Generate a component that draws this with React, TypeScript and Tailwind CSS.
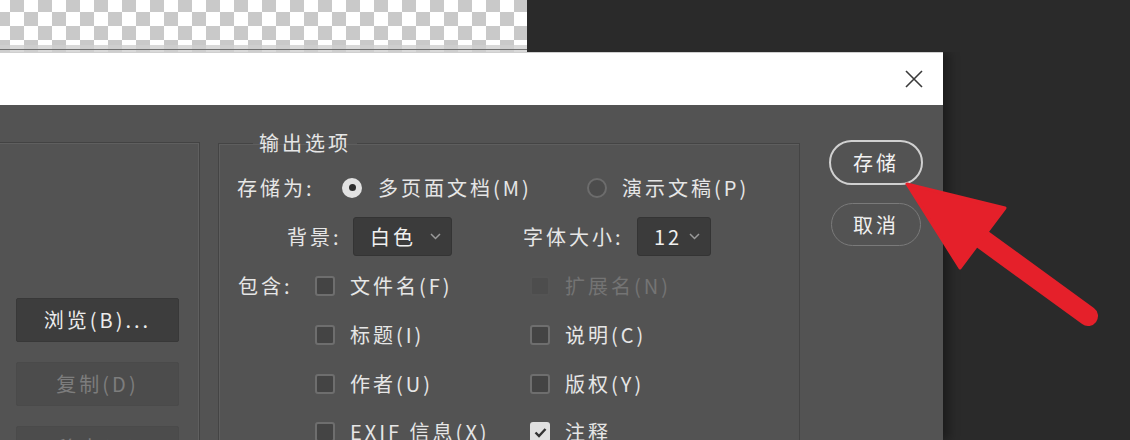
import React from "react";

const font = "font-['Noto_Sans_CJK_SC','Noto_Sans',sans-serif]";

function Radio({ checked }: { checked?: boolean }) {
  return checked ? (
    <span className="flex h-[20px] w-[20px] shrink-0 items-center justify-center rounded-full bg-[#e2e2e2]">
      <span className="h-[7px] w-[7px] rounded-full bg-[#2e2e2e]" />
    </span>
  ) : (
    <span className="h-[20px] w-[20px] shrink-0 rounded-full border-2 border-[#6c6c6c] bg-[#4c4c4c]" />
  );
}

function Box({ checked, disabled }: { checked?: boolean; disabled?: boolean }) {
  if (checked) {
    return (
      <span className="flex h-[20px] w-[20px] shrink-0 items-center justify-center rounded-[3px] bg-[#e0e0e0]">
        <svg width="13" height="11" viewBox="0 0 13 11">
          <path d="M1.5 5.5 L5 9 L11.5 2" fill="none" stroke="#333" strokeWidth="2.4" />
        </svg>
      </span>
    );
  }
  return (
    <span
      className={`h-[20px] w-[20px] shrink-0 rounded-[3px] border-2 ${
        disabled ? "border-[#545454] bg-[#4d4d4d]" : "border-[#6e6e6e] bg-[#444444]"
      }`}
    />
  );
}

function Check({
  label,
  checked,
  disabled,
  wide,
}: {
  label: string;
  checked?: boolean;
  disabled?: boolean;
  wide?: boolean;
}) {
  return (
    <div className={`flex items-center gap-[15px] ${wide ? "w-[215px]" : ""}`}>
      <Box checked={checked} disabled={disabled} />
      <span className={disabled ? "text-[#747474]" : "text-[#e6e6e6]"}>{label}</span>
    </div>
  );
}

function Select({ value, w }: { value: string; w: string }) {
  return (
    <div
      className={`flex h-[39px] items-center justify-between rounded-[3px] border border-[#343434] bg-[#3b3b3b] pl-[16px] pr-[10px] ${w}`}
    >
      <span className="text-[#f0f0f0]">{value}</span>
      <svg width="11" height="7" viewBox="0 0 11 7">
        <path d="M1 1 L5.5 5.5 L10 1" fill="none" stroke="#9a9a9a" strokeWidth="1.5" />
      </svg>
    </div>
  );
}

export default function App() {
  return (
    <div className={`relative h-[440px] w-[1130px] overflow-hidden bg-[#2a2a2a] ${font}`}>
      {/* canvas strip */}
      <div className="flex h-[52px]">
        <div className="relative h-[52px] w-[527px] bg-[conic-gradient(#c9c9c9_25%,#ffffff_0_50%,#c9c9c9_0_75%,#ffffff_0)] bg-[length:28px_28px] bg-[position:-4px_-2px]">
          <div className="absolute bottom-0 left-0 h-[7px] w-full bg-[#cfcfcf] opacity-80" />
          <div className="absolute bottom-[2px] left-0 h-[1px] w-full bg-[#6f6f6f]" />
        </div>
        <div className="flex-1 bg-[#2a2a2a]" />
      </div>

      {/* dialog */}
      <div className="w-[943px] shadow-[6px_0_10px_rgba(0,0,0,0.35)]">
        <div className="flex h-[53px] items-center justify-end border-t border-[#cfcfcf] bg-white pr-[19px]">
          <svg width="20" height="20" viewBox="0 0 20 20">
            <path d="M2 2 L18 18 M18 2 L2 18" stroke="#3a3a3a" strokeWidth="1.6" />
          </svg>
        </div>

        <div className="flex h-[335px] items-start bg-[#535353] text-[20px] leading-none tracking-[3px] text-[#e6e6e6]">
          {/* left panel */}
          <div className="mt-[37px] h-[300px] w-[200px] border-r border-t border-[#434343] shadow-[inset_-1px_1px_0_#5f5f5f]">
            <div className="flex flex-col gap-[20px] pl-[16px] pt-[155px]">
              <div className="flex h-[44px] w-[163px] items-center justify-center rounded-[2px] border border-[#383838] bg-[#3d3d3d] text-[#ececec]">
                浏览(B)...
              </div>
              <div className="flex h-[44px] w-[163px] items-center justify-center rounded-[2px] border border-[#4a4a4a] bg-[#4c4c4c] text-[#7d7d7d]">
                复制(D)
              </div>
              <div className="flex h-[44px] w-[163px] items-center justify-center rounded-[2px] border border-[#4a4a4a] bg-[#4c4c4c] text-[#7d7d7d]">
                移去(R)
              </div>
            </div>
          </div>

          {/* output options */}
          <fieldset className="ml-[18px] mt-[26px] h-[320px] w-[582px] border border-[#444444] shadow-[inset_1px_1px_0_#5e5e5e]">
            <legend className="ml-[34px] px-[6px] leading-[24px] text-[#e6e6e6]">输出选项</legend>
            <div className="pt-[8px]">
              <div className="flex h-[49px] items-center pl-[18px]">
                <span className="w-[105px]">存储为:</span>
                <div className="flex w-[245px] items-center gap-[16px]">
                  <Radio checked />
                  <span>多页面文档(M)</span>
                </div>
                <div className="flex items-center gap-[15px]">
                  <Radio />
                  <span>演示文稿(P)</span>
                </div>
              </div>

              <div className="flex h-[49px] items-center pl-[68px]">
                <span className="w-[66px]">背景:</span>
                <Select value="白色" w="w-[99px]" />
                <span className="ml-[71px] w-[114px]">字体大小:</span>
                <Select value="12" w="w-[74px]" />
              </div>

              <div className="flex h-[49px] items-center pl-[19px]">
                <span className="w-[77px]">包含:</span>
                <Check label="文件名(F)" wide />
                <Check label="扩展名(N)" disabled />
              </div>

              <div className="flex h-[49px] items-center pl-[96px]">
                <Check label="标题(I)" wide />
                <Check label="说明(C)" />
              </div>

              <div className="flex h-[49px] items-center pl-[96px]">
                <Check label="作者(U)" wide />
                <Check label="版权(Y)" />
              </div>

              <div className="flex h-[48px] items-center pl-[96px]">
                <Check label="EXIF 信息(X)" wide />
                <Check label="注释" checked />
              </div>
            </div>
          </fieldset>

          {/* action buttons */}
          <div className="ml-[29px] mt-[35px] flex flex-col items-center gap-[18px]">
            <div className="flex h-[45px] w-[94px] items-center justify-center rounded-full border-2 border-[#d0d0d0] text-[#f2f2f2]">
              存储
            </div>
            <div className="flex h-[43px] w-[90px] items-center justify-center rounded-full border-[1.5px] border-[#7a7a7a] text-[#f0f0f0]">
              取消
            </div>
          </div>
        </div>
      </div>

      {/* red arrow annotation */}
      <svg className="pointer-events-none absolute left-0 top-0" width="1130" height="440">
        <line x1="978" y1="236" x2="1088" y2="316" stroke="#e5202a" strokeWidth="20" strokeLinecap="round" />
        <polygon points="907,184 1005,208 960,268" fill="#e5202a" stroke="#e5202a" strokeWidth="3" strokeLinejoin="round" />
      </svg>
    </div>
  );
}
